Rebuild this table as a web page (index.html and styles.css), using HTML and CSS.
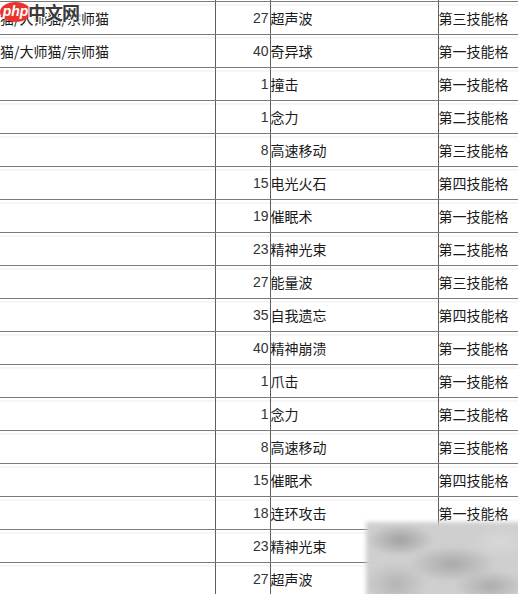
FILE: index.html
```html
<!DOCTYPE html>
<html lang="zh-CN">
<head>
<meta charset="utf-8">
<title>技能表</title>
<link rel="stylesheet" href="styles.css">
</head>
<body>
<div class="page">
  <table class="skills">
    <colgroup>
      <col class="c1"><col class="c2"><col class="c3"><col class="c4">
    </colgroup>
    <tbody>
      <tr class="lead"><td></td><td></td><td></td><td></td></tr>
      <tr><td class="name">猫/大师猫/宗师猫</td><td class="lv">27</td><td>超声波</td><td>第三技能格</td></tr>
      <tr><td class="name">猫/大师猫/宗师猫</td><td class="lv">40</td><td>奇异球</td><td>第一技能格</td></tr>
      <tr><td class="name"></td><td class="lv">1</td><td>撞击</td><td>第一技能格</td></tr>
      <tr><td class="name"></td><td class="lv">1</td><td>念力</td><td>第二技能格</td></tr>
      <tr><td class="name"></td><td class="lv">8</td><td>高速移动</td><td>第三技能格</td></tr>
      <tr><td class="name"></td><td class="lv">15</td><td>电光火石</td><td>第四技能格</td></tr>
      <tr><td class="name"></td><td class="lv">19</td><td>催眠术</td><td>第一技能格</td></tr>
      <tr><td class="name"></td><td class="lv">23</td><td>精神光束</td><td>第二技能格</td></tr>
      <tr><td class="name"></td><td class="lv">27</td><td>能量波</td><td>第三技能格</td></tr>
      <tr><td class="name"></td><td class="lv">35</td><td>自我遗忘</td><td>第四技能格</td></tr>
      <tr><td class="name"></td><td class="lv">40</td><td>精神崩溃</td><td>第一技能格</td></tr>
      <tr><td class="name"></td><td class="lv">1</td><td>爪击</td><td>第一技能格</td></tr>
      <tr><td class="name"></td><td class="lv">1</td><td>念力</td><td>第二技能格</td></tr>
      <tr><td class="name"></td><td class="lv">8</td><td>高速移动</td><td>第三技能格</td></tr>
      <tr><td class="name"></td><td class="lv">15</td><td>催眠术</td><td>第四技能格</td></tr>
      <tr><td class="name"></td><td class="lv">18</td><td>连环攻击</td><td>第一技能格</td></tr>
      <tr><td class="name"></td><td class="lv">23</td><td>精神光束</td><td>第二技能格</td></tr>
      <tr><td class="name"></td><td class="lv">27</td><td>超声波</td><td>第三技能格</td></tr>
    </tbody>
  </table>
  <div class="logo"><span class="php">php</span><span class="cn">中文网</span></div>
  <div class="watermark"></div>
</div>
</body>
</html>
```
FILE: styles.css
```css
html, body {
  margin: 0;
  padding: 0;
  background: #fff;
}
body {
  width: 518px;
  height: 594px;
  overflow: hidden;
}
.page {
  position: relative;
  width: 518px;
  height: 594px;
  overflow: hidden;
}
.skills {
  border-collapse: collapse;
  table-layout: fixed;
  width: 560px;
  margin-top: -31px;
  font-family: "Noto Sans CJK SC", "Liberation Sans", sans-serif;
  font-size: 14px;
  color: #1a1a1a;
}
.c1 { width: 215px; }
.c2 { width: 55px; }
.c3 { width: 168px; }
.c4 { width: 122px; }
.skills td {
  height: 31px;
  padding: 0 0 1px 0;
  border-bottom: 1px solid #7a7a7a;
  border-right: 1px solid #5e5e5e;
  white-space: nowrap;
  overflow: hidden;
  vertical-align: middle;
  line-height: 16px;
  background: linear-gradient(to bottom, transparent 2px, #ececec 2px, #ececec 3px, transparent 3px);
}
.skills td.lv {
  text-align: right;
  padding: 0 1px 1px 0;
  font-family: "Liberation Sans", Arial, sans-serif;
  font-size: 14px;
  color: #333;
}
.skills tr.lead td {
  background: none;
}
.logo {
  position: absolute;
  left: 0;
  top: 2px;
  display: flex;
  align-items: center;
}
.php {
  display: inline-block;
  width: 31px;
  height: 20px;
  line-height: 19px;
  border-radius: 50%;
  background: #e8342c;
  color: #fff;
  font-family: "Liberation Sans", Arial, sans-serif;
  font-style: italic;
  font-weight: bold;
  font-size: 14px;
  text-align: center;
}
.cn {
  margin-left: -3px;
  font-family: "Noto Sans CJK SC", sans-serif;
  font-weight: bold;
  font-size: 18px;
  line-height: 18px;
  color: #3a3a3a;
  text-shadow: 1px 0 0 #fff, -1px 0 0 #fff, 0 1px 0 #fff, 0 -1px 0 #fff;
  letter-spacing: -1px;
}
.watermark {
  position: absolute;
  left: 366px;
  top: 522px;
  width: 156px;
  height: 76px;
  background:
    radial-gradient(ellipse 34px 16px at 34px 18px, #a0a0a0, transparent),
    radial-gradient(ellipse 44px 18px at 86px 42px, #a8a8a8, transparent),
    radial-gradient(ellipse 36px 16px at 124px 64px, #acacac, transparent),
    radial-gradient(ellipse 32px 22px at 30px 62px, #b4b4b4, transparent),
    radial-gradient(ellipse 28px 16px at 134px 20px, #d8d8d8, transparent),
    #cfcfcf;
  filter: blur(2px);
}
```
